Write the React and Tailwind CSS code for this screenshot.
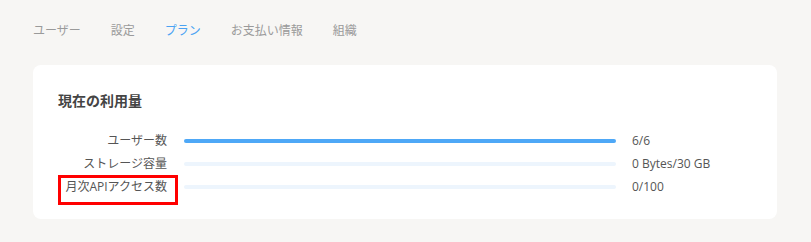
const tabs = ['ユーザー', '設定', 'プラン', 'お支払い情報', '組織']

const usage = [
  { label: 'ユーザー数', value: '6/6', pct: 100 },
  { label: 'ストレージ容量', value: '0 Bytes/30 GB', pct: 0 },
  { label: '月次APIアクセス数', value: '0/100', pct: 0, marked: true },
]

export default function App() {
  return (
    <div
      className="min-h-[242px] w-[811px] bg-[#f7f6f4] px-[33px] pb-[23px] pt-[22px]"
      style={{ fontFamily: '"Open Sans", "Noto Sans CJK JP", sans-serif' }}
    >
      {/* タブ */}
      <nav className="flex gap-[30px] text-[12px] leading-[18px]">
        {tabs.map((t) => (
          <span key={t} className={t === 'プラン' ? 'text-[#4ba3f3]' : 'text-[#9a9a9a]'}>
            {t}
          </span>
        ))}
      </nav>

      {/* 利用量カード */}
      <div className="mt-[25px] w-[744px] rounded-lg bg-white px-[25px] pb-[21px] pt-[26px]">
        <h2 className="text-[14px] font-semibold leading-[20px] text-[#444]">現在の利用量</h2>
        <div className="mt-[18px]">
          {usage.map((u) => (
            <div key={u.label} className="flex h-[23px] items-center">
              <div className="relative flex h-full w-[109px] items-center justify-end text-[12px] text-[#555]">
                {u.label}
                {u.marked && (
                  <div className="absolute -bottom-[7px] -right-[11px] left-0 top-0 border-[3px] border-[#ff0000]" />
                )}
              </div>
              <div className="ml-[17px] h-[4px] w-[432px] rounded-full bg-[#edf5fd]">
                <div className="h-full rounded-full bg-[#4ea8f7]" style={{ width: `${u.pct}%` }} />
              </div>
              <div className="ml-[16px] text-[12px] text-[#555]">{u.value}</div>
            </div>
          ))}
        </div>
      </div>
    </div>
  )
}
